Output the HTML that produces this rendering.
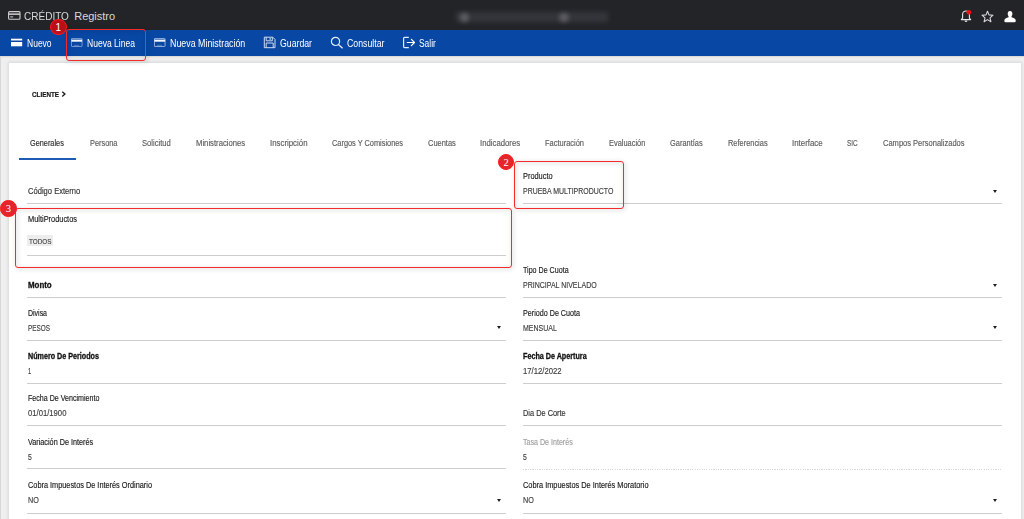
<!DOCTYPE html>
<html><head><meta charset="utf-8">
<style>
*{margin:0;padding:0;box-sizing:border-box}
html,body{width:1024px;height:519px;overflow:hidden;background:#efefef;font-family:"Liberation Sans",sans-serif;position:relative}
.abs{position:absolute}
.tx{position:absolute;white-space:nowrap;transform-origin:0 0;-webkit-text-stroke:0.15px currentColor}
#hdr{position:absolute;left:0;top:0;width:1024px;height:30px;background:#232428}
#nav{position:absolute;left:0;top:30px;width:1024px;height:26px;background:#0847a4}
#navsh{position:absolute;left:0;top:56px;width:1024px;height:2px;background:linear-gradient(#d6d4d1,#efefef)}
#card{position:absolute;left:9px;top:63px;width:1012px;height:470px;background:#fff;box-shadow:0 0 3px 1px rgba(0,0,0,.1)}
.ln{position:absolute;height:1px;background:#cdcdcd}
.arr{position:absolute;width:0;height:0;border-left:2.9px solid transparent;border-right:2.9px solid transparent;border-top:3.4px solid #1e1e1e}
.rb{position:absolute;border:1.8px solid #f52a2a;border-radius:3px;filter:drop-shadow(1px 1.5px 2px rgba(0,0,0,.3))}
.bd{position:absolute;border-radius:50%;background:#e3262c;border:1px solid #ff1a1a;color:#fff;font-family:"Liberation Serif",serif;text-align:center}
</style></head><body>
<div id="hdr"></div>
<div id="nav"></div>
<div id="navsh"></div>
<div class="abs" style="left:0;top:56px;width:1px;height:463px;background:#d8d8d8"></div>
<div id="card"></div>

<!-- title icon -->
<svg class="abs" style="left:8px;top:11px" width="13" height="9" viewBox="0 0 13 9"><rect x="0.6" y="0.6" width="11.4" height="7.6" rx="1" fill="none" stroke="#cfcfcf" stroke-width="1.1"/><rect x="0.6" y="2.4" width="11.4" height="1.5" fill="#cfcfcf"/><rect x="2.2" y="5.4" width="3" height="1" fill="#cfcfcf"/></svg>

<!-- blurred center -->
<div class="abs" style="left:456px;top:12px;width:152px;height:10px;background:#35363b;filter:blur(2.5px)"></div>
<div class="abs" style="left:460px;top:13px;width:9px;height:9px;border-radius:50%;background:#5c5d62;filter:blur(2px)"></div>
<div class="abs" style="left:559px;top:13px;width:10px;height:9px;border-radius:50%;background:#5c5d62;filter:blur(2px)"></div>

<!-- right icons -->
<svg class="abs" style="left:958px;top:8px" width="16" height="16" viewBox="0 0 16 16">
 <path d="M3.3 11.6 L4.6 10.2 L4.6 6.2 C4.6 4.2 6.1 3 8 3 C9.9 3 11.4 4.2 11.4 6.2 L11.4 10.2 L12.7 11.6 Z" fill="none" stroke="#e6e6e6" stroke-width="1.1" stroke-linejoin="round"/>
 <path d="M6.9 12.6 Q8 14.2 9.1 12.6" fill="none" stroke="#e6e6e6" stroke-width="1.1"/>
 <circle cx="10.8" cy="4.3" r="2.4" fill="#f01010"/>
</svg>
<svg class="abs" style="left:981px;top:10px" width="13" height="13" viewBox="0 0 13 13">
 <path d="M6.5 1.2 L8 4.9 L12 5.2 L9 7.8 L9.9 11.7 L6.5 9.6 L3.1 11.7 L4 7.8 L1 5.2 L5 4.9 Z" fill="none" stroke="#d8d8d8" stroke-width="1.1" stroke-linejoin="round"/>
</svg>
<svg class="abs" style="left:1004px;top:10px" width="13" height="13" viewBox="0 0 13 13">
 <path d="M6 0.9 C4.5 0.9 3.7 2.1 3.7 3.6 C3.7 4.9 4.1 5.8 4.6 6.4 L4.6 7.2 C2.3 7.8 0.4 8.6 0.4 10.3 L0.4 11.2 Q0.4 12.3 1.5 12.3 L10.6 12.3 Q11.7 12.3 11.7 11.2 L11.7 10.3 C11.7 8.6 9.8 7.8 7.5 7.2 L7.5 6.4 C8 5.8 8.4 4.9 8.4 3.6 C8.4 2.1 7.6 0.9 6 0.9 Z" fill="#fff"/>
</svg>

<!-- nav icons -->
<svg class="abs" style="left:11px;top:38px" width="12" height="9" viewBox="0 0 12 9"><rect x="0" y="0.7" width="11.2" height="1.8" fill="#fff"/><rect x="0" y="4" width="11.2" height="4.3" fill="#fff"/></svg>
<svg class="abs" style="left:71px;top:38px" width="12" height="9" viewBox="0 0 12 9"><rect x="0.45" y="0.45" width="10.6" height="8.1" rx="0.5" fill="none" stroke="#86a2d6" stroke-width="0.9"/><rect x="0.4" y="1.6" width="10.7" height="2.1" fill="#f4f6fb"/><rect x="3" y="6.9" width="5" height="0.7" fill="#6f8fc8"/></svg>
<svg class="abs" style="left:153.8px;top:38px" width="12" height="9" viewBox="0 0 12 9"><rect x="0.45" y="0.45" width="10.6" height="8.1" rx="0.5" fill="none" stroke="#a4b9e2" stroke-width="0.9"/><rect x="0.4" y="1.6" width="10.7" height="2.1" fill="#f4f6fb"/><rect x="3" y="6.9" width="5" height="0.7" fill="#6f8fc8"/></svg>
<svg class="abs" style="left:263px;top:36px" width="13" height="13" viewBox="0 0 13 13">
 <path d="M1.3 1.2 L9.8 1.2 L12 3.4 L12 11.7 L1.3 11.7 Z" fill="none" stroke="#d0dbf0" stroke-width="1"/>
 <path d="M3.2 1.2 L3.2 4.8 L9.3 4.8 L9.3 1.2" fill="none" stroke="#d0dbf0" stroke-width="1"/>
 <rect x="6.6" y="1.9" width="1.1" height="2" fill="#d0dbf0"/>
 <path d="M3.2 11.7 L3.2 7 L10.2 7 L10.2 11.7" fill="none" stroke="#d0dbf0" stroke-width="1"/>
</svg>
<svg class="abs" style="left:330px;top:36px" width="14" height="13" viewBox="0 0 14 13">
 <circle cx="5.5" cy="5.4" r="4.1" fill="none" stroke="#e6ecf7" stroke-width="1.2"/>
 <path d="M8.4 8.4 L12.3 11.9" stroke="#e6ecf7" stroke-width="1.3" stroke-linecap="round"/>
</svg>
<svg class="abs" style="left:402px;top:36px" width="14" height="13" viewBox="0 0 14 13">
 <path d="M6.8 1.3 L2.6 1.3 Q1.6 1.3 1.6 2.3 L1.6 10.6 Q1.6 11.6 2.6 11.6 L6.8 11.6" fill="none" stroke="#e6ecf7" stroke-width="1.2"/>
 <path d="M5.2 6.5 L12.4 6.5 M9.4 3.3 L12.5 6.5 L9.4 9.7" fill="none" stroke="#ffffff" stroke-width="1.2" stroke-linejoin="round" stroke-linecap="round"/>
</svg>

<!-- cliente chevron -->
<svg class="abs" style="left:60.6px;top:90.8px" width="6" height="7" viewBox="0 0 6 7"><path d="M1.2 0.8 L3.9 3.1 L1.2 5.4" fill="none" stroke="#1a1a1a" stroke-width="1.35"/></svg>

<!-- tab underline -->
<div class="abs" style="left:19px;top:158px;width:56.5px;height:2px;background:#1f5ab4"></div>

<!-- chip -->
<div class="abs" style="left:27.4px;top:235px;width:25.5px;height:11.4px;background:#ededed;border-radius:1px"></div>

<!-- lines -->
<div class="ln" style="left:27px;top:203px;width:479px"></div>
<div class="ln" style="left:523px;top:203px;width:479px"></div>
<div class="ln" style="left:27px;top:255px;width:479px"></div>
<div class="ln" style="left:27px;top:297px;width:479px"></div>
<div class="ln" style="left:523px;top:297px;width:479px"></div>
<div class="ln" style="left:27px;top:340px;width:479px"></div>
<div class="ln" style="left:523px;top:340px;width:479px"></div>
<div class="ln" style="left:27px;top:383px;width:479px"></div>
<div class="ln" style="left:523px;top:383px;width:479px"></div>
<div class="ln" style="left:27px;top:425px;width:479px"></div>
<div class="ln" style="left:523px;top:425px;width:479px"></div>
<div class="ln" style="left:27px;top:468px;width:479px"></div>
<div class="abs" style="left:523px;top:469px;width:479px;height:1px;background:repeating-linear-gradient(90deg,#d8d8d8 0 1.2px,transparent 1.2px 2.35px)"></div>
<div class="ln" style="left:27px;top:513px;width:479px"></div>
<div class="ln" style="left:523px;top:513px;width:479px"></div>

<!-- arrows -->
<div class="arr" style="left:992.6px;top:189.8px"></div>
<div class="arr" style="left:992.6px;top:283.8px"></div>
<div class="arr" style="left:496.9px;top:326.1px"></div>
<div class="arr" style="left:992.6px;top:326.3px"></div>
<div class="arr" style="left:496.9px;top:498.7px"></div>
<div class="arr" style="left:992.8px;top:498.8px"></div>

<div class="tx" style="left:23.90px;top:10px;font-size:11px;line-height:13px;color:#d8d8d8;transform:scaleX(0.9107);-webkit-text-stroke:0;">CRÉDITO</div>
<div class="tx" style="left:74.20px;top:10px;font-size:11px;line-height:13px;color:#d8d8d8;-webkit-text-stroke:0;">Registro</div>
<div class="tx" style="left:27.20px;top:38px;font-size:10px;line-height:12px;color:#fff;transform:scaleX(0.8510);-webkit-text-stroke:0;">Nuevo</div>
<div class="tx" style="left:86.70px;top:38px;font-size:10px;line-height:12px;color:#fff;transform:scaleX(0.8548);-webkit-text-stroke:0;">Nueva Linea</div>
<div class="tx" style="left:169.90px;top:38px;font-size:10px;line-height:12px;color:#fff;transform:scaleX(0.8855);-webkit-text-stroke:0;">Nueva Ministración</div>
<div class="tx" style="left:279.90px;top:38px;font-size:10px;line-height:12px;color:#fff;transform:scaleX(0.8723);-webkit-text-stroke:0;">Guardar</div>
<div class="tx" style="left:347.00px;top:38px;font-size:10px;line-height:12px;color:#fff;transform:scaleX(0.8739);-webkit-text-stroke:0;">Consultar</div>
<div class="tx" style="left:418.90px;top:38px;font-size:10px;line-height:12px;color:#fff;transform:scaleX(0.8398);-webkit-text-stroke:0;">Salir</div>
<div class="tx" style="left:32.00px;top:91px;font-size:7px;line-height:8px;color:#111;font-weight:bold;transform:scaleX(0.9017);">CLIENTE</div>
<div class="tx" style="left:30.40px;top:139px;font-size:8.2px;line-height:10px;color:#2e2e2e;transform:scaleX(0.8948);">Generales</div>
<div class="tx" style="left:89.60px;top:139px;font-size:8.2px;line-height:10px;color:#5c5c5c;transform:scaleX(0.8985);">Persona</div>
<div class="tx" style="left:141.70px;top:139px;font-size:8.2px;line-height:10px;color:#5c5c5c;transform:scaleX(0.9274);">Solicitud</div>
<div class="tx" style="left:195.60px;top:139px;font-size:8.2px;line-height:10px;color:#5c5c5c;transform:scaleX(0.9402);">Ministraciones</div>
<div class="tx" style="left:269.50px;top:139px;font-size:8.2px;line-height:10px;color:#5c5c5c;transform:scaleX(0.9582);">Inscripción</div>
<div class="tx" style="left:331.70px;top:139px;font-size:8.2px;line-height:10px;color:#5c5c5c;transform:scaleX(0.9005);">Cargos Y Comisiones</div>
<div class="tx" style="left:427.70px;top:139px;font-size:8.2px;line-height:10px;color:#5c5c5c;transform:scaleX(0.9116);">Cuentas</div>
<div class="tx" style="left:479.90px;top:139px;font-size:8.2px;line-height:10px;color:#5c5c5c;transform:scaleX(0.9473);">Indicadores</div>
<div class="tx" style="left:545.00px;top:139px;font-size:8.2px;line-height:10px;color:#5c5c5c;transform:scaleX(0.9117);">Facturación</div>
<div class="tx" style="left:609.00px;top:139px;font-size:8.2px;line-height:10px;color:#5c5c5c;transform:scaleX(0.9088);">Evaluación</div>
<div class="tx" style="left:670.40px;top:139px;font-size:8.2px;line-height:10px;color:#5c5c5c;transform:scaleX(0.9068);">Garantías</div>
<div class="tx" style="left:727.70px;top:139px;font-size:8.2px;line-height:10px;color:#5c5c5c;transform:scaleX(0.9064);">Referencias</div>
<div class="tx" style="left:792.00px;top:139px;font-size:8.2px;line-height:10px;color:#5c5c5c;transform:scaleX(0.9636);">Interface</div>
<div class="tx" style="left:847.30px;top:139px;font-size:8.2px;line-height:10px;color:#5c5c5c;transform:scaleX(0.7840);">SIC</div>
<div class="tx" style="left:882.70px;top:139px;font-size:8.2px;line-height:10px;color:#5c5c5c;transform:scaleX(0.9184);">Campos Personalizados</div>
<div class="tx" style="left:27.60px;top:186px;font-size:8.4px;line-height:10px;color:#333;transform:scaleX(0.9060);">Código Externo</div>
<div class="tx" style="left:523.30px;top:172px;font-size:8.2px;line-height:10px;color:#1a1a1a;transform:scaleX(0.9033);">Producto</div>
<div class="tx" style="left:523.30px;top:187px;font-size:8.2px;line-height:10px;color:#404040;transform:scaleX(0.8508);">PRUEBA MULTIPRODUCTO</div>
<div class="tx" style="left:27.60px;top:215px;font-size:8.2px;line-height:10px;color:#1a1a1a;transform:scaleX(0.9049);">MultiProductos</div>
<div class="tx" style="left:29.10px;top:237px;font-size:8px;line-height:10px;color:#444;transform:scaleX(0.7950);">TODOS</div>
<div class="tx" style="left:27.60px;top:280px;font-size:8.6px;line-height:10px;color:#111;font-weight:bold;transform:scaleX(0.9197);-webkit-text-stroke:0.3px currentColor;">Monto</div>
<div class="tx" style="left:523.30px;top:266px;font-size:8.2px;line-height:10px;color:#1a1a1a;transform:scaleX(0.8688);">Tipo De Cuota</div>
<div class="tx" style="left:523.30px;top:281px;font-size:8.2px;line-height:10px;color:#404040;transform:scaleX(0.8564);">PRINCIPAL NIVELADO</div>
<div class="tx" style="left:27.60px;top:309px;font-size:8.2px;line-height:10px;color:#1a1a1a;transform:scaleX(0.8523);">Divisa</div>
<div class="tx" style="left:27.60px;top:324px;font-size:8.2px;line-height:10px;color:#404040;transform:scaleX(0.7798);">PESOS</div>
<div class="tx" style="left:523.30px;top:309px;font-size:8.2px;line-height:10px;color:#1a1a1a;transform:scaleX(0.8758);">Periodo De Cuota</div>
<div class="tx" style="left:523.30px;top:324px;font-size:8.2px;line-height:10px;color:#404040;transform:scaleX(0.8539);">MENSUAL</div>
<div class="tx" style="left:27.60px;top:352px;font-size:8.2px;line-height:10px;color:#111;font-weight:bold;transform:scaleX(0.8767);-webkit-text-stroke:0.3px currentColor;">Número De Periodos</div>
<div class="tx" style="left:27.60px;top:367px;font-size:8.2px;line-height:10px;color:#404040;transform:scaleX(0.7028);">1</div>
<div class="tx" style="left:523.30px;top:352px;font-size:8.2px;line-height:10px;color:#111;font-weight:bold;transform:scaleX(0.8777);-webkit-text-stroke:0.3px currentColor;">Fecha De Apertura</div>
<div class="tx" style="left:523.30px;top:367px;font-size:8.2px;line-height:10px;color:#404040;transform:scaleX(0.9420);">17/12/2022</div>
<div class="tx" style="left:27.60px;top:394px;font-size:8.2px;line-height:10px;color:#1a1a1a;transform:scaleX(0.8668);">Fecha De Vencimiento</div>
<div class="tx" style="left:27.60px;top:409px;font-size:8.2px;line-height:10px;color:#404040;transform:scaleX(0.9371);">01/01/1900</div>
<div class="tx" style="left:523.30px;top:408px;font-size:8.4px;line-height:10px;color:#333;transform:scaleX(0.8821);">Dia De Corte</div>
<div class="tx" style="left:27.60px;top:438px;font-size:8.2px;line-height:10px;color:#1a1a1a;transform:scaleX(0.8849);">Variación De Interés</div>
<div class="tx" style="left:27.60px;top:453px;font-size:8.2px;line-height:10px;color:#404040;transform:scaleX(0.8345);">5</div>
<div class="tx" style="left:523.30px;top:438px;font-size:8.2px;line-height:10px;color:#a0a0a0;transform:scaleX(0.8668);">Tasa De Interés</div>
<div class="tx" style="left:523.30px;top:453px;font-size:8.2px;line-height:10px;color:#404040;transform:scaleX(0.8345);">5</div>
<div class="tx" style="left:27.60px;top:481px;font-size:8.2px;line-height:10px;color:#1a1a1a;transform:scaleX(0.8963);">Cobra Impuestos De Interés Ordinario</div>
<div class="tx" style="left:27.60px;top:496px;font-size:8.2px;line-height:10px;color:#404040;transform:scaleX(0.8794);">NO</div>
<div class="tx" style="left:523.30px;top:481px;font-size:8.2px;line-height:10px;color:#1a1a1a;transform:scaleX(0.9013);">Cobra Impuestos De Interés Moratorio</div>
<div class="tx" style="left:523.30px;top:496px;font-size:8.2px;line-height:10px;color:#404040;transform:scaleX(0.8794);">NO</div>

<!-- red boxes -->
<div class="rb" style="left:65.5px;top:29px;width:80.5px;height:32.3px"></div>
<div class="rb" style="left:513.7px;top:161.3px;width:110.6px;height:47.6px"></div>
<div class="rb" style="left:15px;top:208.3px;width:497.3px;height:60px"></div>

<!-- badges -->
<div class="bd" style="left:50.1px;top:18.7px;width:16.6px;height:16.6px;font-size:10px;line-height:15.5px;background:rgba(200,14,20,.92);font-family:'Liberation Sans',sans-serif">1</div>
<div class="bd" style="left:497.9px;top:153.6px;width:16.4px;height:16.4px;font-size:10.5px;line-height:15px">2</div>
<div class="bd" style="left:0px;top:200.1px;width:16.5px;height:16.5px;font-size:10.5px;line-height:15px">3</div>
</body></html>
